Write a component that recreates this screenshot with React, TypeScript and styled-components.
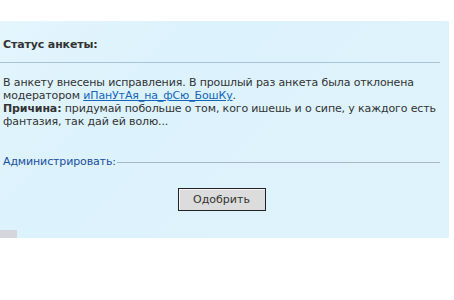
import React from "react";
import styled, { createGlobalStyle } from "styled-components";

const Global = createGlobalStyle`
  html, body { margin: 0; padding: 0; background: #ffffff; }
  body { font-family: "DejaVu Sans", Tahoma, sans-serif; font-size: 11px; color: #333333; }
`;

const Page = styled.div`
  padding-top: 21px;
  width: 454px;
  height: 300px;
  box-sizing: border-box;
`;

const Panel = styled.div`
  width: 449px;
  height: 217px;
  box-sizing: border-box;
  background: linear-gradient(135deg, #e4f5fd 0%, #dcf2fc 30%, #dff3fc 100%);
  padding: 17px 9px 0 3px;
  display: flex;
  flex-direction: column;
  position: relative;
  letter-spacing: -0.13px;
`;

const Heading = styled.div`
  font-weight: bold;
  font-size: 11px;
  line-height: 14px;
  color: #333333;
`;

const Rule = styled.div`
  height: 1px;
  background: #a8c4d4;
  margin: 10px 0 13px -3px;
`;

const Text = styled.div`
  line-height: 13px;
  color: #333333;
  white-space: nowrap;
`;

const Link = styled.a`
  color: #1466b8;
  text-decoration: underline;
`;

const Legend = styled.div`
  margin-top: 27px;
  display: flex;
  align-items: center;
  color: #1a4f9e;
  line-height: 14px;
`;

const LegendLine = styled.div`
  flex: 1;
  height: 1px;
  background: #a8b4c8;
  margin-left: 1px;
`;

const ButtonRow = styled.div`
  display: flex;
  justify-content: center;
  margin-top: 19px;
`;

const Button = styled.button`
  width: 88px;
  height: 23px;
  background: #dcdcdc;
  border: 1px solid #222222;
  box-shadow: inset 1px 1px 0 #f4f4f4;
  font-family: "DejaVu Sans", Tahoma, sans-serif;
  font-size: 11px;
  color: #333333;
  padding: 0;
`;

const Corner = styled.div`
  position: absolute;
  left: 0;
  bottom: 0;
  width: 17px;
  height: 8px;
  background: #d4d6dc;
`;

export default function App() {
  return (
    <Page>
      <Global />
      <Panel>
        <Heading>Статус анкеты:</Heading>
        <Rule />
        <Text>
          В анкету внесены исправления. В прошлый раз анкета была отклонена
          <br />
          модератором <Link href="#">иПанУтАя_на_фСю_БошКу</Link>.
          <br />
          <b>Причина:</b> придумай побольше о том, кого ишешь и о сипе, у каждого есть
          <br />
          фантазия, так дай ей волю...
        </Text>
        <Legend>
          Администрировать:
          <LegendLine />
        </Legend>
        <ButtonRow>
          <Button>Одобрить</Button>
        </ButtonRow>
        <Corner />
      </Panel>
    </Page>
  );
}
